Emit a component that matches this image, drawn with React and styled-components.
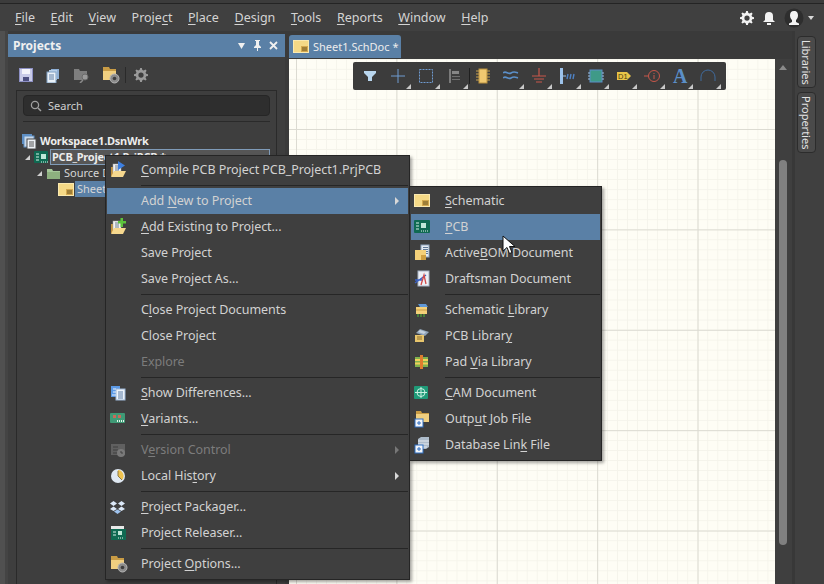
import React from 'react';
import styled, { createGlobalStyle } from 'styled-components';

const GlobalStyle = createGlobalStyle`
  html, body {
    margin: 0;
    height: 100%;
    overflow: hidden;
    background: #3c3c3c;
    font-family: "Noto Sans", "Open Sans", sans-serif;
  }
`;

const Window = styled.div`
  position: relative;
  width: 824px;
  height: 584px;
  overflow: hidden;
  display: flex;
  flex-direction: column;
  background: #3a3a3a;
  color: #d8d8d8;
  font-size: 12.5px;
`;

const TopEdge = styled.div`
  height: 3px;
  background: #3c3c3c;
  border-bottom: 1px solid #242424;
`;

const MenuBar = styled.div`
  height: 27px;
  flex: none;
  display: flex;
  align-items: center;
  padding: 0 10px 0 15px;
  background: #404040;
`;

const MenuItem = styled.span`
  margin-right: 15.6px;
  color: #d4d4d4;
`;

const Key = styled.span`
  text-decoration: underline;
  text-underline-offset: 2px;
  text-decoration-thickness: 1px;
`;

const MenuRight = styled.div`
  margin-left: auto;
  display: flex;
  align-items: center;
  gap: 9px;
`;

const Caret = styled.span`
  margin-left: -5px;
  border-style: solid;
  border-width: 4px 3.5px 0 3.5px;
  border-color: #d8d8d8 transparent transparent transparent;
`;

const Main = styled.div`
  flex: 1;
  min-height: 0;
  display: flex;
`;

const EdgeStrip = styled.div`
  width: 8px;
  flex: none;
  background: linear-gradient(90deg, #505050 0 5px, #444 5px 8px);
`;

const Panel = styled.div`
  width: 277px;
  flex: none;
  margin-top: 3px;
  display: flex;
  flex-direction: column;
  background: #3e3e3e;
`;

const PanelHeader = styled.div`
  height: 23px;
  flex: none;
  display: flex;
  align-items: center;
  justify-content: space-between;
  padding: 0 7px 1px 5px;
  box-sizing: border-box;
  background: #5a80a6;
  color: #f0f0f0;
  font-size: 12px;
  font-weight: 700;
`;

const HeaderIcons = styled.div`
  display: flex;
  align-items: center;
  gap: 7px;
`;

const PanelTools = styled.div`
  height: 33px;
  flex: none;
  box-sizing: border-box;
  display: flex;
  align-items: center;
  padding: 3px 0 0 11px;
`;

const ToolSlot = styled.span`
  width: ${(p) => p.$w}px;
  flex: none;
`;

const ToolDivider = styled.span`
  width: 1px;
  height: 16px;
  margin-right: 8px;
  background: #2a2a2a;
`;

const TreeBox = styled.div`
  flex: 1;
  margin: 0 8px;
  padding: 4px 6px 0;
  border: 1px solid #2a2a2a;
  border-bottom: 0;
`;

const SearchBox = styled.div`
  height: 21px;
  box-sizing: border-box;
  display: flex;
  align-items: center;
  gap: 6px;
  padding-left: 6px;
  background: #2e2e2e;
  border: 1px solid #262626;
  border-radius: 4px;
  color: #cfcfcf;
  font-size: 11px;
`;

const TreeDivider = styled.div`
  height: 1px;
  margin: 5px 0 11px;
  background: #2a2a2a;
`;

const TreeRow = styled.div`
  height: 16px;
  display: flex;
  align-items: center;
  gap: 2px;
  padding-left: ${(p) => p.$indent}px;
  margin-left: -6px;
  margin-right: -6px;
  font-size: 11px;
  white-space: nowrap;
`;

const Twist = styled.span`
  width: 0;
  height: 0;
  margin-right: 2px;
  border-style: solid;
  border-width: 0 0 5px 5px;
  border-color: transparent transparent #d0d0d0 transparent;
`;

const TreeLabel = styled.span`
  flex: ${(p) => (p.$grow ? 1 : 'none')};
  height: ${(p) => (p.$boxed ? 14 : 16)}px;
  line-height: ${(p) => (p.$boxed ? 14 : 16)}px;
  padding: 0 ${(p) => (p.$selected ? 2 : 1)}px;
  margin-left: ${(p) => (p.$selected ? -1 : 0)}px;
  margin-right: ${(p) => (p.$boxed ? 6 : 0)}px;
  font-weight: ${(p) => (p.$bold ? 700 : 400)};
  letter-spacing: ${(p) => (p.$bold ? -0.25 : 0)}px;
  color: ${(p) => (p.$bold ? '#ececec' : '#d6d6d6')};
  background: ${(p) => (p.$selected ? '#5a80a6' : p.$boxed ? '#565656' : 'transparent')};
  border: ${(p) => (p.$boxed ? '1px solid #7f9bb8' : '0')};
`;

const Center = styled.div`
  flex: 1;
  min-width: 0;
  display: flex;
  flex-direction: column;
  margin-left: 4px;
`;

const TabStrip = styled.div`
  height: 28px;
  flex: none;
  box-sizing: border-box;
  padding-bottom: 1px;
  display: flex;
  align-items: flex-end;
`;

const DocTab = styled.div`
  width: 112px;
  height: 23px;
  display: flex;
  align-items: center;
  gap: 4px;
  padding: 0 0 1px 4px;
  box-sizing: border-box;
  background: #5a80a6;
  border-radius: 3px 3px 0 0;
  color: #ececec;
  font-size: 11px;
  white-space: nowrap;
`;

const CanvasRow = styled.div`
  flex: 1;
  min-height: 0;
  display: flex;
`;

const Canvas = styled.div`
  flex: 1;
  position: relative;
  background-color: #fefdf5;
  background-image:
    linear-gradient(90deg, #dcdbd2 1px, transparent 1px),
    linear-gradient(#dcdbd2 1px, transparent 1px),
    linear-gradient(90deg, #f5f4eb 1px, transparent 1px),
    linear-gradient(#f5f4eb 1px, transparent 1px);
  background-size: 100.4px 100.4px, 100.4px 100.4px, 10.04px 10.04px, 10.04px 10.04px;
  background-position: 7px 70px, 7px 70px, 7px 70px, 7px 70px;
`;

const Toolbar = styled.div`
  position: absolute;
  left: 64px;
  top: 3px;
  height: 28px;
  display: flex;
  align-items: center;
  padding: 0 4px 0 3px;
  background: #3c3c3c;
  border-radius: 2px;
`;

const ToolButton = styled.span`
  position: relative;
  width: 28.2px;
  height: 28px;
  display: flex;
  align-items: center;
  justify-content: center;

  ${(p) => p.$more && `
    &::after {
      content: '';
      position: absolute;
      right: 1px;
      bottom: 1px;
      border-style: solid;
      border-width: 0 0 5px 5px;
      border-color: transparent transparent #c8c8c8 transparent;
    }
  `}
`;

const ToolSep = styled.span`
  width: 1px;
  height: 16px;
  margin-right: -1px;
  background: #1f1f1f;
`;

const ScrollTrack = styled.div`
  position: relative;
  width: 17px;
  flex: none;
  background: #3f3f3f;
`;

const ScrollArrow = styled.span`
  position: absolute;
  left: 4px;
  top: 6px;
  border-style: solid;
  border-width: 0 4px 5px 4px;
  border-color: transparent transparent #8a8a8a transparent;
`;

const ScrollThumb = styled.span`
  position: absolute;
  left: 4px;
  top: 101px;
  width: 8px;
  height: 385px;
  background: #808080;
  border-radius: 4px;
`;

const RightDock = styled.div`
  width: 32px;
  flex: none;
  display: flex;
  flex-direction: column;
  gap: 4px;
  padding: 5px 0 0 2px;
  box-sizing: border-box;
  border-left: 3px solid #383838;
  background: #404040;
`;

const DockTab = styled.div`
  width: 19px;
  height: ${(p) => p.$h}px;
  box-sizing: border-box;
  display: flex;
  align-items: center;
  justify-content: center;
  writing-mode: vertical-rl;
  background: #4a4a4a;
  border: 1px solid #2c2c2c;
  border-radius: 4px;
  color: #e4e4e4;
  font-size: 11px;
`;

const Popup = styled.div`
  position: absolute;
  left: ${(p) => p.$x}px;
  top: ${(p) => p.$y}px;
  width: ${(p) => p.$w}px;
  box-sizing: border-box;
  padding: 1px 1px 2px;
  background: #3f3f3f;
  border: 1px solid #252525;
  box-shadow: 2px 2px 3px rgba(0, 0, 0, 0.35);
`;

const Row = styled.div`
  height: 26px;
  box-sizing: border-box;
  padding: 0 0 1px 3px;
  display: flex;
  align-items: center;
  background: ${(p) => (p.$active ? '#5a80a6' : 'transparent')};
  color: ${(p) => (p.$off ? '#7c7c7c' : '#d2d2d2')};
  letter-spacing: -0.06px;
  white-space: nowrap;
`;

const RowIcon = styled.span`
  width: 31px;
  flex: none;
  display: flex;
  justify-content: flex-start;
  opacity: ${(p) => (p.$off ? 0.45 : 1)};
`;

const RowArrow = styled.span`
  margin-left: auto;
  margin-right: 9px;
  border-style: solid;
  border-width: 4px 0 4px 4px;
  border-color: transparent transparent transparent ${(p) => (p.$off ? '#777' : '#d8d8d8')};
`;

const Sep = styled.div`
  height: 1px;
  margin: 2px 0 2px 34px;
  background: #262626;
`;

const Cursor = styled.svg`
  position: absolute;
  left: 502px;
  top: 235px;
`;

const Svg = ({ s = 16, w, h, children }) => (
  <svg width={w || s} height={h || s} viewBox={`0 0 ${w || s} ${h || s}`} style={{ display: 'block' }}>
    {children}
  </svg>
);

const Sheet = () => (
  <Svg w={16} h={13}>
    <rect x="0.500" y="0.500" width="15" height="12" fill="#f5d986" stroke="#fae9b0" />
    <rect x="8" y="6" width="7" height="6" fill="#d4a94e" />
    <path d="M9 8h5M9 10h5" stroke="#6b5520" />
  </Svg>
);

const Folder = () => (
  <Svg w={15} h={13}>
    <path d="M1 2h5l1 2h7v8H1z" fill="#a6c89a" />
    <path d="M1 5h13v7H1z" fill="#8db07f" />
  </Svg>
);

const Board = ({ w = 16, h = 13 }) => (
  <Svg w={w} h={h}>
    <rect x="0" y="0" width={w} height={h} fill="#0f6a52" rx="1" />
    <path d="M2 3h3M2 6h3M2 9h3" stroke="#d7f1e6" />
    <rect x="7" y="3" width="5" height="5" fill="#bfe8d8" />
    <path d="M7 11h7" stroke="#e6f7f0" strokeDasharray="1 1" />
  </Svg>
);

const WorkspaceIcon = () => (
  <Svg w={16} h={16}>
    <rect x="1" y="1" width="10" height="10" fill="#5f8fc4" />
    <rect x="3" y="3" width="10" height="11" fill="#c9d9ea" stroke="#5f8fc4" />
    <rect x="6" y="6" width="9" height="10" fill="#eef2f6" stroke="#4b4b4b" />
    <path d="M8 9h5M8 11h5M8 13h5" stroke="#555" />
  </Svg>
);

const OpenFolder = ({ badge }) => (
  <Svg w={16} h={17}>
    <path d="M1 6h3v9H1z" fill="#c2923e" />
    <rect x="3" y="3" width="8" height="9" fill="#f2f2f2" stroke="#a8a8a8" strokeWidth="0.500" />
    <path d="M5 5h4M5 7h4M5 9h4" stroke="#6c7c90" />
    <path d="M4 10h12l-3 6H1z" fill="#f6d88e" />
    {badge === 'play' && <path d="M8 0l7 4.500L8 9z" fill="#3d7fe0" />}
    {badge === 'plus' && <path d="M10.500 0h2.500v3h3v2.500h-3V9h-2.500V5.500H8V3h2.500z" fill="#5cc43c" />}
  </Svg>
);

const Diff = () => (
  <Svg>
    <rect x="1" y="1" width="9" height="11" fill="#5c9ae6" />
    <rect x="6" y="4" width="9" height="11" fill="#eef4fb" stroke="#9db8d8" />
    <path d="M8 7h5M8 9h5M8 11h5M8 13h5" stroke="#5a7da6" />
    <path d="M3 4h3M3 7h3M2 10h4" stroke="#e8f2ff" />
  </Svg>
);

const VariantsIcon = () => (
  <Svg w={15} h={13}>
    <rect x="0" y="1" width="15" height="10" fill="#3f9a76" rx="1" />
    <rect x="3" y="3" width="3" height="3" fill="#c96a5a" />
    <rect x="8" y="3" width="3" height="3" fill="#c96a5a" />
    <path d="M7 9h7" stroke="#e4f6ec" strokeDasharray="1 1" strokeWidth="2" />
  </Svg>
);

const VersionIcon = () => (
  <Svg>
    <rect x="1" y="2" width="14" height="11" fill="#8a8a8a" />
    <path d="M3 5h5M3 8h5M3 11h5" stroke="#3f3f3f" />
    <circle cx="11" cy="11" r="4" fill="#c0c0c0" />
    <path d="M11 9v2h2" stroke="#444" fill="none" />
  </Svg>
);

const Clock = () => (
  <Svg>
    <circle cx="8" cy="8" r="7" fill="#dfe8f2" />
    <path d="M8 2a6 6 0 0 1 4 10L8 8z" fill="#f0c34e" />
    <path d="M8 3v5l4 4" stroke="#8a7a48" fill="none" />
  </Svg>
);

const Dropbox = () => (
  <Svg w={15} h={14}>
    <path d="M3.500 1L7 3.500 3.500 6 0 3.500zM11.500 1L15 3.500 11.500 6 8 3.500zM3.500 6.500L7 9 3.500 11 0 9zM11.500 6.500L15 9l-3.500 2L8 9z" fill="#dbe8f7" />
    <path d="M4 11.500L7.500 9.500 11 11.500 7.500 14z" fill="#9fc3ee" />
  </Svg>
);

const Releaser = () => (
  <Svg w={16} h={15}>
    <path d="M1 1h13v6H1z" fill="#e8e8e8" />
    <rect x="1" y="4" width="15" height="11" fill="#0f6a52" />
    <path d="M3 7h3M3 10h3" stroke="#d7f1e6" />
    <rect x="8" y="6" width="4" height="4" fill="#bfe8d8" />
    <path d="M8 13h6" stroke="#e6f7f0" strokeDasharray="1 1" />
  </Svg>
);

const FolderGear = () => (
  <Svg w={18} h={18}>
    <path d="M1 1h6l1 2h6v10H1z" fill="#c99c45" />
    <path d="M1 5h13v9H1z" fill="#f0cf80" />
    <circle cx="12.500" cy="12.500" r="4.500" fill="#8c8c8c" stroke="#b5b5b5" />
    <circle cx="12.500" cy="12.500" r="1.800" fill="#3f3f3f" />
  </Svg>
);

const ActiveBom = () => (
  <Svg w={16} h={17}>
    <rect x="7" y="1" width="8" height="12" fill="#e4ebf3" stroke="#8fa6c0" />
    <path d="M9 3.500h5M9 5.500h5M9 7.500h5M9 9.500h5" stroke="#5f7896" />
    <rect x="1" y="6" width="11" height="10" fill="#f4d079" />
    <rect x="7" y="11" width="5" height="5" fill="#cf9f40" />
  </Svg>
);

const Draftsman = () => (
  <Svg w={16} h={17}>
    <rect x="4" y="1" width="11" height="15" fill="#eef1f6" stroke="#a8b4c6" />
    <path d="M1 13L12 5M1 10h8" stroke="#3b62c4" strokeWidth="1.400" />
    <path d="M7 15l3-10 2 9" stroke="#d24a4a" strokeWidth="1.300" fill="none" />
  </Svg>
);

const SchLib = () => (
  <Svg w={16} h={16}>
    <path d="M4 2h8l2 3H6z" fill="#5f97d6" />
    <rect x="2" y="5" width="11" height="7" fill="#f4d079" />
    <path d="M2 8h11" stroke="#c99c45" />
    <path d="M4 12v3M7 12v3M10 12v3" stroke="#4f9a3a" strokeWidth="1.400" />
  </Svg>
);

const PcbLib = () => (
  <Svg w={16} h={15}>
    <path d="M6 1l9 3-4 4-9-3z" fill="#8fa3b8" />
    <path d="M6 2l6 2-2 2-6-2z" fill="#c4d0dc" />
    <rect x="1" y="7" width="9" height="7" fill="#e8c56c" />
    <path d="M3 9h5M3 11h5" stroke="#8a6f2e" />
  </Svg>
);

const PadVia = () => (
  <Svg w={15} h={16}>
    <rect x="1" y="3" width="13" height="10" fill="#7fb24e" />
    <path d="M1 6h13M1 9.500h13" stroke="#f2d05a" strokeWidth="2" />
    <rect x="6" y="1" width="3" height="14" fill="#e07c2e" />
  </Svg>
);

const Cam = () => (
  <Svg w={14} h={15}>
    <rect x="0" y="1" width="14" height="13" rx="1" fill="#1f9a78" />
    <circle cx="7" cy="7.500" r="4" fill="none" stroke="#c8f0e0" />
    <path d="M7 2v11M1 7.500h12" stroke="#c8f0e0" />
  </Svg>
);

const BluePlus = () => (
  <g>
    <rect x="1" y="9" width="8" height="8" fill="#f4f7fb" stroke="#2f6fc2" />
    <path d="M3 13h4M5 11v4" stroke="#2f6fc2" />
  </g>
);

const OutputJob = () => (
  <Svg w={16} h={18}>
    <path d="M2 1h5l1 2h7v9H2z" fill="#c99c45" />
    <path d="M2 4h13v8H2z" fill="#f0cf80" />
    <BluePlus />
  </Svg>
);

const DbLink = () => (
  <Svg w={16} h={18}>
    <path d="M4 3l3-2h8v10l-3 2H4z" fill="#aebccb" />
    <path d="M4 5h11M4 8h11M4 11h9" stroke="#e4eaf0" />
    <BluePlus />
  </Svg>
);

const Save = () => (
  <Svg w={14} h={14}>
    <rect x="0.500" y="0.500" width="13" height="13" fill="#c9cbe8" stroke="#8d90c4" />
    <rect x="3" y="1" width="8" height="5" fill="#f4f4fa" />
    <rect x="4" y="9" width="6" height="4" fill="#4e5080" />
  </Svg>
);

const Docs = () => (
  <Svg w={14} h={15}>
    <rect x="5" y="1" width="8" height="10" fill="#8fb0d6" />
    <rect x="3" y="2" width="8" height="10" fill="#b8d0ea" />
    <rect x="1" y="4" width="9" height="11" fill="#eaf1f8" stroke="#7fa0c4" />
    <path d="M3 7h5M3 9h5M3 11h5" stroke="#5f7fa6" />
  </Svg>
);

const FolderSearch = () => (
  <Svg w={17} h={15}>
    <path d="M1 1h5l1 2h7v9H1z" fill="#7e7e7e" />
    <circle cx="12" cy="9" r="3" fill="#9a9a9a" stroke="#6a6a6a" />
    <path d="M10 12l-3 3" stroke="#888" strokeWidth="1.600" />
  </Svg>
);

const Gear = ({ s = 15, c = '#9a9a9a', hole = '#3e3e3e' }) => (
  <Svg s={s}>
    <g transform={`scale(${s / 16})`}>
      <path d="M7 0h2l.5 2.200 1.600.7 2-1.200 1.300 1.300-1.200 2 .7 1.600L16 7v2l-2.100.5-.7 1.600 1.200 2-1.300 1.300-2-1.200-1.600.7L9 16H7l-.5-2.100-1.600-.7-2 1.200-1.300-1.300 1.200-2-.7-1.600L0 9V7l2.100-.5.7-1.600-1.200-2 1.300-1.300 2 1.200 1.600-.7z" fill={c} />
      <circle cx="8" cy="8" r="3" fill={hole} />
    </g>
  </Svg>
);

const Magnifier = () => (
  <Svg w={12} h={12}>
    <circle cx="5" cy="5" r="3.600" fill="none" stroke="#a0a0a0" strokeWidth="1.300" />
    <path d="M8 8l3 3" stroke="#a0a0a0" strokeWidth="1.500" />
  </Svg>
);

const toolbarIcons = [
  { more: false, el: <Svg><path d="M2 3h12v2l-4 4v4H6V9L2 5z" fill="#b9d6ee" /></Svg> },
  { more: true, el: <Svg><path d="M8 1v14M1 8h14" stroke="#6f9bd0" /></Svg> },
  { more: true, el: <Svg><rect x="1.500" y="1.500" width="13" height="13" fill="none" stroke="#6f9bd0" strokeDasharray="2 1" /></Svg> },
  { more: true, el: <Svg><path d="M3 1v14" stroke="#7a7a7a" strokeWidth="2" /><path d="M5 3h7v3H5z" fill="#858585" /><path d="M5 8h8v1H5zM5 11h8v1H5z" fill="#6e6e6e" /></Svg>, sep: true },
  { more: false, el: <Svg><rect x="4" y="1" width="8" height="14" fill="#f0c870" stroke="#b8903e" /><path d="M1 3h3M1 6h3M1 9h3M1 12h3M12 3h3M12 6h3M12 9h3M12 12h3" stroke="#c9a24e" /></Svg> },
  { more: true, el: <Svg><path d="M0 5c3-3 5 2 8 0s4-1 7 0M0 10c3-3 5 2 8 0s4-1 7 0" stroke="#5b8fc8" strokeWidth="1.600" fill="none" /></Svg> },
  { more: true, el: <Svg><path d="M8 0v8M1 8h14M3 11h10M5 14h6" stroke="#c8574a" strokeWidth="1.200" /></Svg> },
  { more: true, el: <Svg><rect x="1" y="0" width="3" height="16" fill="#9cc2ea" /><path d="M4 8h3" stroke="#9cc2ea" /><path d="M8 11l1-5M11 11l1-5M14 11l1-5" stroke="#4f82c4" strokeWidth="1.400" /></Svg> },
  { more: true, el: <Svg><rect x="2" y="2" width="12" height="12" fill="#3f9a88" stroke="#5b8fc8" /><path d="M0 5h2M0 8h2M0 11h2M14 5h2M14 8h2M14 11h2" stroke="#9cc2ea" /></Svg> },
  { more: true, el: <Svg><path d="M1 4h10l4 4-4 4H1z" fill="#e8c448" /><text x="2" y="11" fontSize="7.500" fill="#4a3c10" fontFamily="Liberation Sans">D1</text></Svg> },
  { more: true, el: <Svg><circle cx="10" cy="8" r="5.500" fill="none" stroke="#c8574a" /><path d="M0 8h4M10 5v1M10 7v4" stroke="#c8574a" /></Svg> },
  { more: true, el: <span style={{ fontFamily: 'Liberation Serif', fontSize: 20, fontWeight: 700, color: '#5b8fc8', lineHeight: '20px' }}>A</span> },
  { more: true, el: <Svg><path d="M1 13V9a7 7 0 0 1 14 0v4" fill="none" stroke="#3f6a9c" /></Svg> },
];

const mainMenu = [
  { label: <><Key>C</Key>ompile PCB Project PCB_Project1.PrjPCB</>, icon: <OpenFolder badge="play" /> },
  'sep',
  { label: <>Add <Key>N</Key>ew to Project</>, active: true, arrow: true },
  { label: <><Key>A</Key>dd Existing to Project...</>, icon: <OpenFolder badge="plus" /> },
  { label: 'Save Project' },
  { label: 'Save Project As...' },
  'sep',
  { label: <>C<Key>l</Key>ose Project Documents</> },
  { label: 'Close Project' },
  { label: 'Explore', off: true },
  'sep',
  { label: <><Key>S</Key>how Differences...</>, icon: <Diff /> },
  { label: <><Key>V</Key>ariants...</>, icon: <VariantsIcon /> },
  'sep',
  { label: <>V<Key>e</Key>rsion Control</>, icon: <VersionIcon />, off: true, arrow: true },
  { label: <>Local His<Key>t</Key>ory</>, icon: <Clock />, arrow: true },
  'sep',
  { label: <><Key>P</Key>roject Packager...</>, icon: <Dropbox /> },
  { label: 'Project Releaser...', icon: <Releaser /> },
  'sep',
  { label: <>Project <Key>O</Key>ptions...</>, icon: <FolderGear /> },
];

const newMenu = [
  { label: <><Key>S</Key>chematic</>, icon: <Sheet /> },
  { label: <><Key>P</Key>CB</>, icon: <Board />, active: true },
  { label: <>Active<Key>B</Key>OM Document</>, icon: <ActiveBom /> },
  { label: 'Draftsman Document', icon: <Draftsman /> },
  'sep',
  { label: <>Schematic <Key>L</Key>ibrary</>, icon: <SchLib /> },
  { label: <>PCB Librar<Key>y</Key></>, icon: <PcbLib /> },
  { label: <>Pad <Key>V</Key>ia Library</>, icon: <PadVia /> },
  'sep',
  { label: <><Key>C</Key>AM Document</>, icon: <Cam /> },
  { label: <>Outp<Key>u</Key>t Job File</>, icon: <OutputJob /> },
  { label: <>Database Lin<Key>k</Key> File</>, icon: <DbLink /> },
];

const MenuRows = ({ items }) =>
  items.map((item, i) =>
    item === 'sep' ? (
      <Sep key={i} />
    ) : (
      <Row key={i} $active={item.active} $off={item.off}>
        <RowIcon $off={item.off}>{item.icon}</RowIcon>
        <span>{item.label}</span>
        {item.arrow && <RowArrow $off={item.off} />}
      </Row>
    )
  );

export default function App() {
  return (
    <Window>
      <GlobalStyle />
      <TopEdge />
      <MenuBar>
        <MenuItem><Key>F</Key>ile</MenuItem>
        <MenuItem><Key>E</Key>dit</MenuItem>
        <MenuItem><Key>V</Key>iew</MenuItem>
        <MenuItem>Proje<Key>c</Key>t</MenuItem>
        <MenuItem><Key>P</Key>lace</MenuItem>
        <MenuItem><Key>D</Key>esign</MenuItem>
        <MenuItem><Key>T</Key>ools</MenuItem>
        <MenuItem><Key>R</Key>eports</MenuItem>
        <MenuItem><Key>W</Key>indow</MenuItem>
        <MenuItem><Key>H</Key>elp</MenuItem>
        <MenuRight>
          <Gear s={14} c="#f2f2f2" hole="#404040" />
          <Svg w={12} h={14}>
            <path d="M6 1a4 4 0 0 1 4 4v4l2 2H0l2-2V5a4 4 0 0 1 4-4z" fill="#f2f2f2" />
            <rect x="4" y="12" width="4" height="2" fill="#f2f2f2" />
          </Svg>
          <Svg w={20} h={20}>
            <circle cx="10" cy="10" r="9.500" fill="#2e2e2e" />
            <path d="M10 3c3 0 4 2 4 4.500s-1.500 4-2 4.500v2l3 1.500v1.500H5V15.500l3-1.500v-2c-.5-.5-2-2-2-4.500S7 3 10 3z" fill="#f4f4f4" />
          </Svg>
          <Caret />
        </MenuRight>
      </MenuBar>
      <Main>
        <EdgeStrip />
        <Panel>
          <PanelHeader>
            <span>Projects</span>
            <HeaderIcons>
              <Svg w={9} h={9}><path d="M1 2h7L4.500 8z" fill="#f0f0f0" /></Svg>
              <Svg w={9} h={11}><path d="M2 0h5v1H6v4l2 2v1H5v3H4V8H1V7l2-2V1H2z" fill="#f0f0f0" /></Svg>
              <Svg w={9} h={9}><path d="M1 1l7 7M8 1L1 8" stroke="#f0f0f0" strokeWidth="1.800" /></Svg>
            </HeaderIcons>
          </PanelHeader>
          <PanelTools>
            <ToolSlot $w={27}><Save /></ToolSlot>
            <ToolSlot $w={27}><Docs /></ToolSlot>
            <ToolSlot $w={29}><FolderSearch /></ToolSlot>
            <ToolSlot $w={23}><FolderGear /></ToolSlot>
            <ToolDivider />
            <Gear s={14} />
          </PanelTools>
          <TreeBox>
            <SearchBox>
              <Magnifier />
              Search
            </SearchBox>
            <TreeDivider />
            <TreeRow $indent={4}>
              <WorkspaceIcon />
              <TreeLabel $bold>Workspace1.DsnWrk</TreeLabel>
            </TreeRow>
            <TreeRow $indent={8}>
              <Twist />
              <Board w={14} h={12} />
              <TreeLabel $bold $boxed $grow>PCB_Project1.PrjPCB *</TreeLabel>
            </TreeRow>
            <TreeRow $indent={20}>
              <Twist />
              <Folder />
              <TreeLabel>Source Documents</TreeLabel>
            </TreeRow>
            <TreeRow $indent={41}>
              <Sheet />
              <TreeLabel $selected>Sheet1.SchDoc</TreeLabel>
            </TreeRow>
          </TreeBox>
        </Panel>
        <Center>
          <TabStrip>
            <DocTab>
              <Sheet />
              Sheet1.SchDoc *
            </DocTab>
          </TabStrip>
          <CanvasRow>
            <Canvas>
              <Toolbar>
                {toolbarIcons.map((t, i) => (
                  <React.Fragment key={i}>
                    <ToolButton $more={t.more}>{t.el}</ToolButton>
                    {t.sep && <ToolSep />}
                  </React.Fragment>
                ))}
              </Toolbar>
            </Canvas>
            <ScrollTrack>
              <ScrollArrow />
              <ScrollThumb />
            </ScrollTrack>
          </CanvasRow>
        </Center>
        <RightDock>
          <DockTab $h={52}>Libraries</DockTab>
          <DockTab $h={61}>Properties</DockTab>
        </RightDock>
      </Main>
      <Popup $x={105} $y={155} $w={305}>
        <MenuRows items={mainMenu} />
      </Popup>
      <Popup $x={409} $y={186} $w={193}>
        <MenuRows items={newMenu} />
      </Popup>
      <Cursor width="14" height="20" viewBox="0 0 14 20">
        <path d="M1 1v15l4-3.500 2.500 6 2.500-1-2.500-6H13z" fill="#fff" stroke="#111" strokeWidth="1" />
      </Cursor>
    </Window>
  );
}
